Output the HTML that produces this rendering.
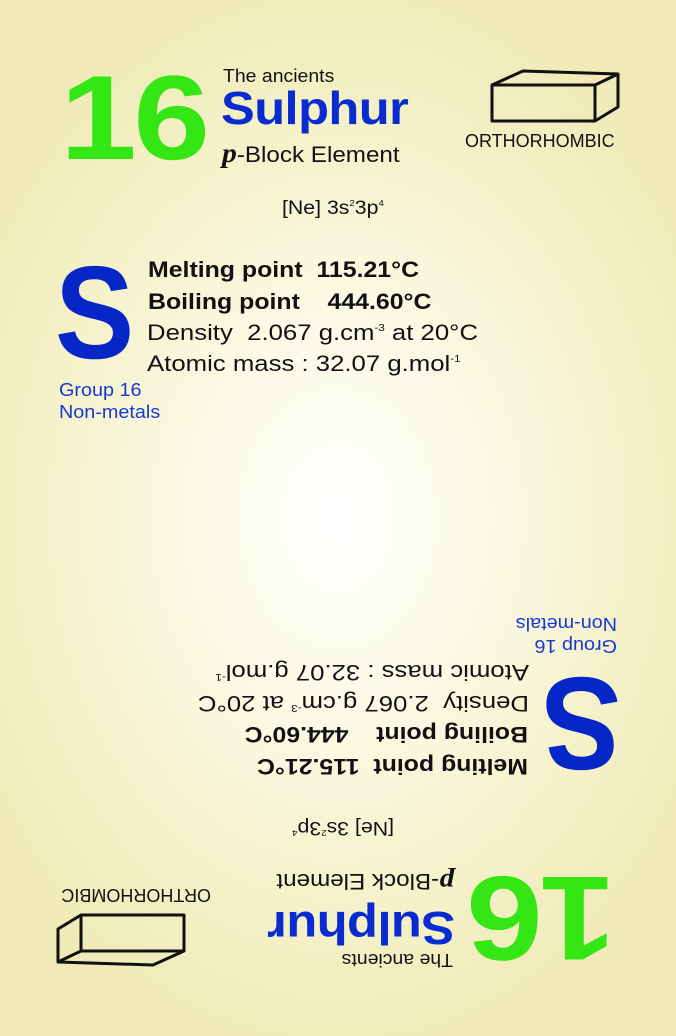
<!DOCTYPE html>
<html><head><meta charset="utf-8"><style>
html,body{margin:0;padding:0}
body{width:676px;height:1036px;position:relative;overflow:hidden;
background:radial-gradient(ellipse 420px 560px at 338px 518px,#ffffff 0%,#fbfae6 35%,#f4f0c6 75%,#efeab6 100%);
font-family:"Liberation Sans",sans-serif;}
.half{position:absolute;left:0;top:0;width:676px;height:1036px}
.rot{transform:rotate(180deg)}
.a{position:absolute;white-space:nowrap;line-height:1;transform-origin:0 0}
sup{font-size:0.45em;vertical-align:0;position:relative;top:-0.9em}
</style></head><body>
<div class="half">
<div class="a" style="left:60px;top:58px;font-size:120px;font-weight:bold;color:#33e614;letter-spacing:-3px;transform:scaleX(1.15)">16</div>
<div class="a" style="left:223px;top:67px;font-size:18px;color:#111;transform:scaleX(1.08)">The ancients</div>
<div class="a" style="left:221px;top:85px;font-size:46px;font-weight:bold;color:#0a2bd0;letter-spacing:-0.5px;transform:scaleX(1.1)">Sulphur</div>
<div class="a" style="left:222px;top:140px;font-size:22px;color:#111;transform:scaleX(1.1)"><span style="font-family:'Liberation Serif',serif;font-weight:bold;font-style:italic;font-size:27px">p</span>-Block Element</div>
<svg class="a" style="left:488px;top:66px" width="136" height="62"><path d="M4 19 L35 5 L130 8 L130 41 L107 55 L4 55 Z M4 19 L107 19 L107 55 M107 19 L130 8" fill="none" stroke="#111" stroke-width="3" stroke-linejoin="round"/></svg>
<div class="a" style="left:465px;top:132px;font-size:18px;color:#111">ORTHORHOMBIC</div>
<div class="a" style="left:282px;top:199px;font-size:19px;color:#111;transform:scaleX(1.12)">[Ne] 3s<sup>2</sup>3p<sup>4</sup></div>
<div class="a" style="left:55px;top:247px;font-size:132px;font-weight:bold;color:#0626c8;transform:scaleX(0.9)">S</div>
<div class="a" style="left:148px;top:259px;font-size:22px;font-weight:bold;color:#111;transform:scaleX(1.13)">Melting point&nbsp; 115.21°C</div>
<div class="a" style="left:148px;top:291px;font-size:22px;font-weight:bold;color:#111;transform:scaleX(1.13)">Boiling point&nbsp;&nbsp;&nbsp; 444.60°C</div>
<div class="a" style="left:147px;top:322px;font-size:22px;color:#111;transform:scaleX(1.17)">Density&nbsp; 2.067 g.cm<sup>-3</sup> at 20°C</div>
<div class="a" style="left:147px;top:353px;font-size:22px;color:#111;transform:scaleX(1.17)">Atomic mass : 32.07 g.mol<sup>-1</sup></div>
<div class="a" style="left:59px;top:381px;font-size:18px;color:#1838d0;transform:scaleX(1.1)">Group 16</div>
<div class="a" style="left:59px;top:403px;font-size:18px;color:#1838d0;transform:scaleX(1.1)">Non-metals</div>
</div>
<div class="half rot">
<div class="a" style="left:60px;top:58px;font-size:120px;font-weight:bold;color:#33e614;letter-spacing:-3px;transform:scaleX(1.15)">16</div>
<div class="a" style="left:223px;top:67px;font-size:18px;color:#111;transform:scaleX(1.08)">The ancients</div>
<div class="a" style="left:221px;top:85px;font-size:46px;font-weight:bold;color:#0a2bd0;letter-spacing:-0.5px;transform:scaleX(1.1)">Sulphur</div>
<div class="a" style="left:222px;top:140px;font-size:22px;color:#111;transform:scaleX(1.1)"><span style="font-family:'Liberation Serif',serif;font-weight:bold;font-style:italic;font-size:27px">p</span>-Block Element</div>
<svg class="a" style="left:488px;top:66px" width="136" height="62"><path d="M4 19 L35 5 L130 8 L130 41 L107 55 L4 55 Z M4 19 L107 19 L107 55 M107 19 L130 8" fill="none" stroke="#111" stroke-width="3" stroke-linejoin="round"/></svg>
<div class="a" style="left:465px;top:132px;font-size:18px;color:#111">ORTHORHOMBIC</div>
<div class="a" style="left:282px;top:199px;font-size:19px;color:#111;transform:scaleX(1.12)">[Ne] 3s<sup>2</sup>3p<sup>4</sup></div>
<div class="a" style="left:55px;top:247px;font-size:132px;font-weight:bold;color:#0626c8;transform:scaleX(0.9)">S</div>
<div class="a" style="left:148px;top:259px;font-size:22px;font-weight:bold;color:#111;transform:scaleX(1.13)">Melting point&nbsp; 115.21°C</div>
<div class="a" style="left:148px;top:291px;font-size:22px;font-weight:bold;color:#111;transform:scaleX(1.13)">Boiling point&nbsp;&nbsp;&nbsp; 444.60°C</div>
<div class="a" style="left:147px;top:322px;font-size:22px;color:#111;transform:scaleX(1.17)">Density&nbsp; 2.067 g.cm<sup>-3</sup> at 20°C</div>
<div class="a" style="left:147px;top:353px;font-size:22px;color:#111;transform:scaleX(1.17)">Atomic mass : 32.07 g.mol<sup>-1</sup></div>
<div class="a" style="left:59px;top:381px;font-size:18px;color:#1838d0;transform:scaleX(1.1)">Group 16</div>
<div class="a" style="left:59px;top:403px;font-size:18px;color:#1838d0;transform:scaleX(1.1)">Non-metals</div>
</div>
</body></html>
